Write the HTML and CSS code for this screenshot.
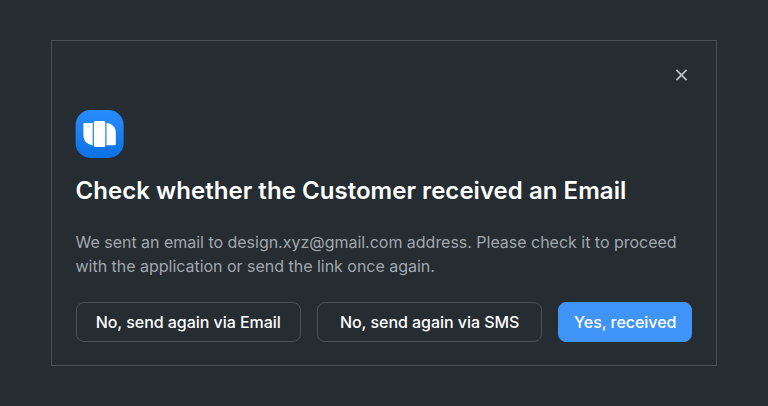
FILE: index.html
```html
<!DOCTYPE html>
<html lang="en">
<head>
<meta charset="utf-8">
<title>Check Email</title>
<link rel="stylesheet" href="styles.css">
</head>
<body>
<main class="dialog" role="dialog" aria-labelledby="title">
  <div class="top">
    <button class="close" aria-label="Close">
      <svg width="12" height="12" viewBox="0 0 12 12"><path d="M.4 .9l10.200 10.200M10.600 .9L.4 11.100"/></svg>
    </button>
  </div>
  <svg class="logo" width="48" height="48" viewBox="0.400 0 48 48">
    <defs><linearGradient id="g" x1="0" y1="0" x2="0" y2="1"><stop offset="0" stop-color="#2a8cfc"/><stop offset="1" stop-color="#0b72e4"/></linearGradient></defs>
    <rect width="48" height="48" rx="15" fill="url(#g)"/>
    <g fill="#fff">
      <path d="M9 13H17.100V35.200C11 34.500 7.800 30.500 7.800 25V14.200Q7.800 13 9 13Z"/>
      <rect x="18.300" y="11" width="11.400" height="26" rx="1.500"/>
      <path d="M30.900 13C37 13.500 40.200 17.500 40.200 23V34Q40.200 35.200 39 35.200H30.900Z"/>
    </g>
  </svg>
  <h1 class="title" id="title">Check whether the Customer received an Email</h1>
  <p class="text">We sent an email to design.xyz@gmail.com address. Please check it to proceed with the application or send the link once again.</p>
  <div class="actions">
    <button class="btn">No, send again via Email</button>
    <button class="btn">No, send again via SMS</button>
    <button class="btn primary">Yes, received</button>
  </div>
</main>
</body>
</html>
```
FILE: styles.css
```css
* { box-sizing: border-box; }
body {
  margin: 0;
  height: 406px;
  padding: 40px 51px;
  background: #252c32;
  font-family: Inter, sans-serif;
}
.dialog {
  width: 665.5px;
  height: 326px;
  padding: 23px 23.5px;
  border: 1px solid #4a5257;
}
.top { display: flex; justify-content: flex-end; height: 46px; padding-right: 4px; }
.close { width: 12px; height: 22px; padding: 0; border: 0; background: none; }
.close svg { display: block; stroke: #b9bfc4; stroke-width: 1.8; fill: none; }
.logo { display: block; overflow: visible; }
.title { margin: 17px 0 0; font-size: 24px; line-height: 32px; font-weight: 600; letter-spacing: 0.04px; color: #fff; white-space: nowrap; }
.text { margin: 23px 0 0; font-size: 16px; line-height: 24px; letter-spacing: -0.02px; color: #a1a8ae; }
.actions { display: grid; grid-template-columns: 225.5px 225.5px 134px; gap: 15.9px; margin-top: 24px; }
.btn {
  height: 40px;
  padding: 0;
  border: 1px solid #4b5359;
  border-radius: 8px;
  background: none;
  color: #fff;
  font: 500 16px/24px Inter, sans-serif;
  letter-spacing: -0.04px;
  white-space: nowrap;
}
.primary { background: #4094f7; border-color: #4094f7; }
```
